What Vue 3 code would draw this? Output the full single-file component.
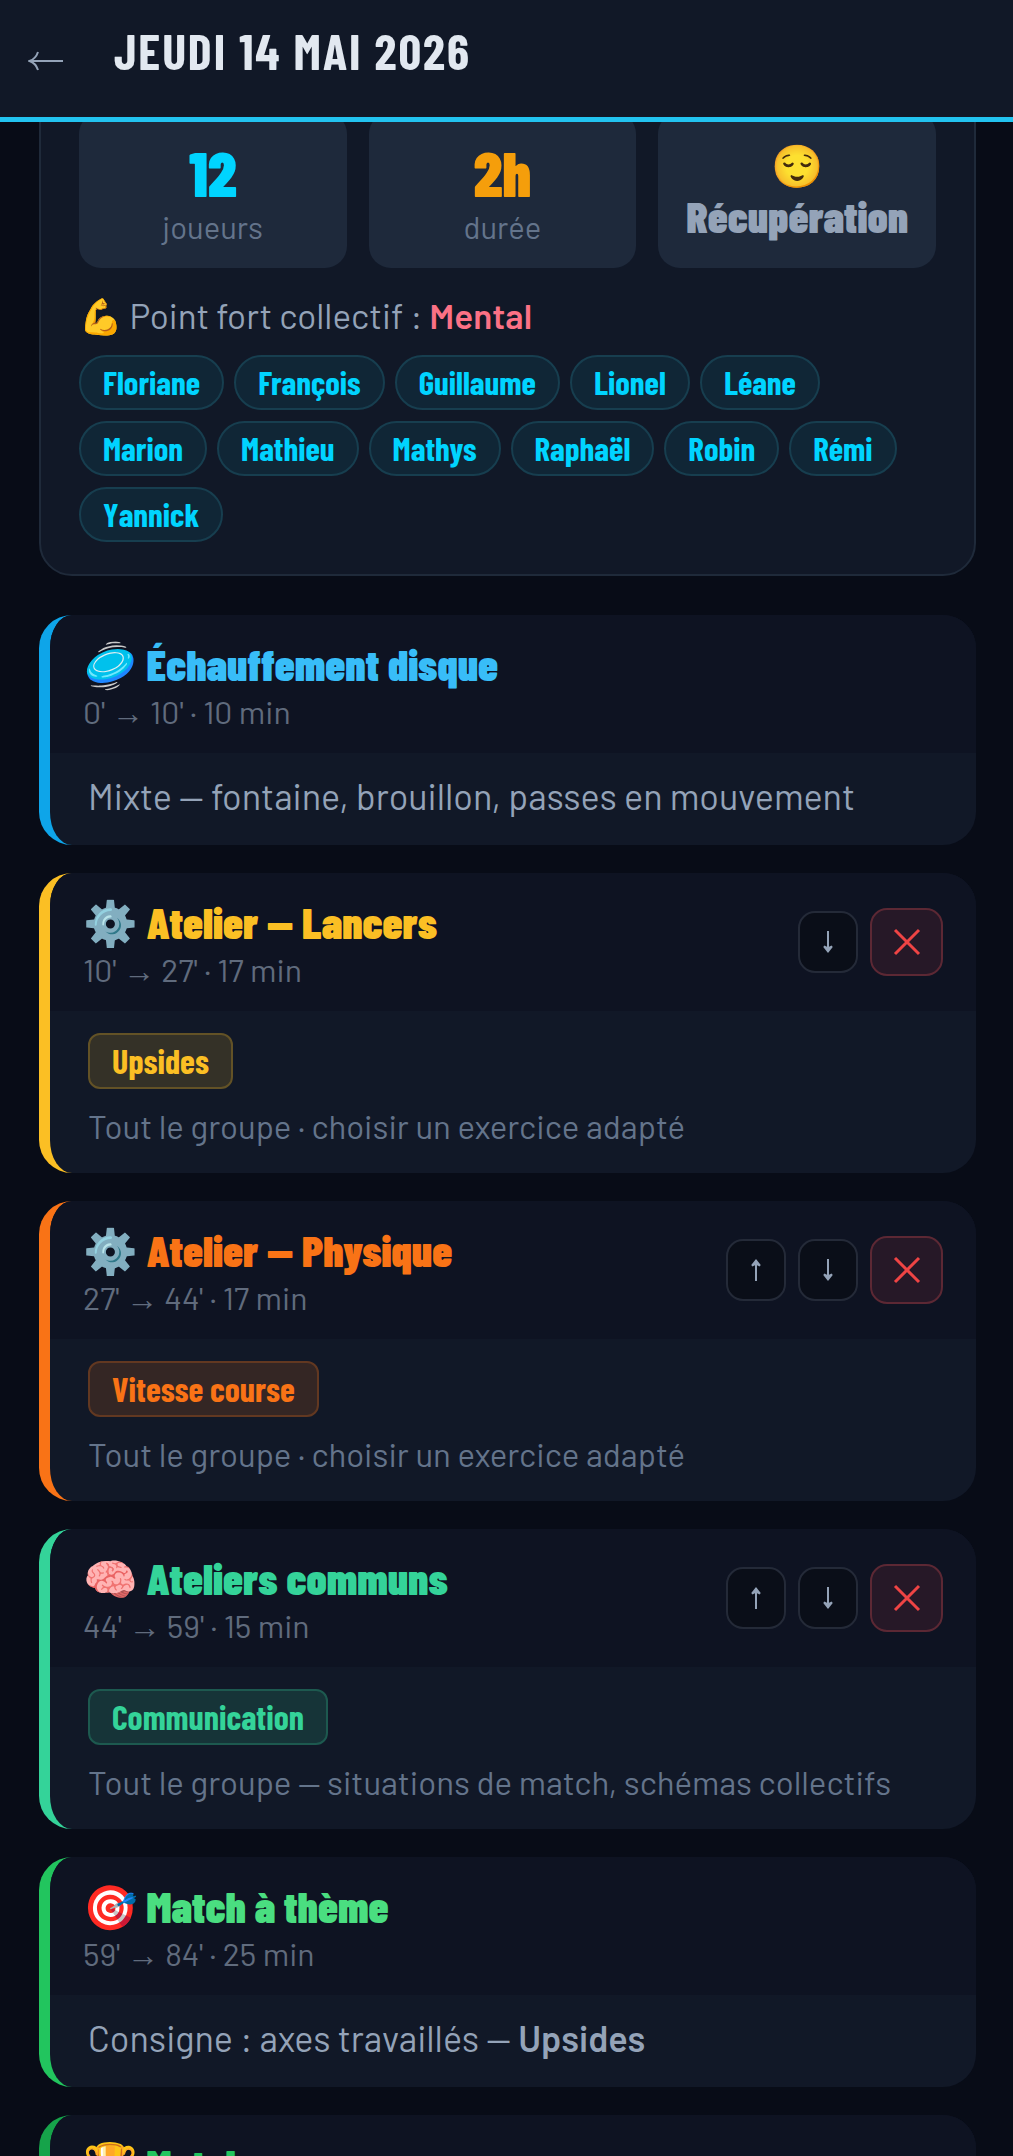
<template>
  <div class="page">
    <header class="topbar">
      <button class="back" type="button" aria-label="Retour">
        <svg viewBox="0 0 36 22" width="36" height="22" class="back-icon"><path d="M35 11H2M10 2C8.500 6.500 6 9.500 1.500 11C6 12.500 8.500 15.500 10 20" /></svg>
      </button>
      <h1>Jeudi 14 mai 2026</h1>
    </header>

    <main class="content">
      <section class="summary">
        <div class="stats">
          <div class="stat">
            <span class="value cyan">12</span>
            <span class="label">joueurs</span>
          </div>
          <div class="stat">
            <span class="value amber">2h</span>
            <span class="label">durée</span>
          </div>
          <div class="stat">
            <span class="mood-icon">😌</span>
            <span class="mood">Récupération</span>
          </div>
        </div>
        <p class="strength"><span class="emoji">💪</span> Point fort collectif : <strong>Mental</strong></p>
        <ul class="players">
          <li v-for="p in players" :key="p">{{ p }}</li>
        </ul>
      </section>

      <article v-for="b in blocks" :key="b.title" class="block" :class="b.theme">
        <div class="block-head">
          <div>
            <h2><span class="emoji">{{ b.icon }}</span> {{ b.title }}</h2>
            <p class="time">{{ b.time }}</p>
          </div>
          <div v-if="b.editable" class="actions">
            <button v-if="b.up" type="button" class="move" aria-label="Monter">
              <svg viewBox="0 0 12 24" width="12" height="24"><path d="M6 23V3M2 7.500L6 2.500L10 7.500L6 5.500Z" /></svg>
            </button>
            <button type="button" class="move" aria-label="Descendre">
              <svg viewBox="0 0 12 24" width="12" height="24"><path d="M6 1V21M2 16.500L6 21.500L10 16.500L6 18.500Z" /></svg>
            </button>
            <button type="button" class="remove" aria-label="Supprimer">
              <svg viewBox="0 0 28 28" width="28" height="28"><path d="M2 2L26 26M26 2L2 26" /></svg>
            </button>
          </div>
        </div>
        <div class="block-body">
          <span v-if="b.tag" class="tag">{{ b.tag }}</span>
          <p :class="b.tag ? 'hint' : 'text'">{{ b.text }} <strong v-if="b.focus">{{ b.focus }}</strong></p>
        </div>
      </article>
    </main>
  </div>
</template>

<script setup>
const players = [
  'Floriane', 'François', 'Guillaume', 'Lionel', 'Léane', 'Marion',
  'Mathieu', 'Mathys', 'Raphaël', 'Robin', 'Rémi', 'Yannick'
]

// Déroulé de la séance
const blocks = [
  { theme: 'sky', icon: '🥏', title: 'Échauffement disque', time: "0' → 10' · 10 min", text: 'Mixte — fontaine, brouillon, passes en mouvement' },
  { theme: 'yellow', icon: '⚙️', title: 'Atelier — Lancers', time: "10' → 27' · 17 min", tag: 'Upsides', text: 'Tout le groupe · choisir un exercice adapté', editable: true },
  { theme: 'orange', icon: '⚙️', title: 'Atelier — Physique', time: "27' → 44' · 17 min", tag: 'Vitesse course', text: 'Tout le groupe · choisir un exercice adapté', editable: true, up: true },
  { theme: 'mint', icon: '🧠', title: 'Ateliers communs', time: "44' → 59' · 15 min", tag: 'Communication', text: 'Tout le groupe — situations de match, schémas collectifs', editable: true, up: true },
  { theme: 'green', icon: '🎯', title: 'Match à thème', time: "59' → 84' · 25 min", text: 'Consigne : axes travaillés —', focus: 'Upsides' },
  { theme: 'forest', icon: '🏆', title: 'Match', time: "84' → 120' · 36 min", text: 'Match libre' }
]
</script>

<style>
body {
  background: #080c17;
}
</style>

<style scoped>
.page {
  --cond: 'Barlow Condensed', 'Roboto Condensed', 'Liberation Sans Narrow', 'Noto Color Emoji', sans-serif;
  font-family: Barlow, Roboto, 'Noto Color Emoji', sans-serif;
  color: #94a3b8;
  height: 100vh;
  overflow: hidden;
}

h1, h2, p, ul {
  margin: 0;
  padding: 0;
}

.topbar {
  position: relative;
  z-index: 2;
  display: flex;
  align-items: flex-start;
  gap: 22px;
  height: 117px;
  padding: 0 28px;
  background: #111827;
  border-bottom: 5px solid #22c3f0;
}

.back {
  display: flex;
  padding: 50px 28px 20px 0;
  background: none;
  border: none;
}

.back-icon {
  fill: none;
  stroke: #94a3b8;
  stroke-width: 2;
}

h1 {
  padding-top: 22px;
  font-family: var(--cond);
  font-size: 50px;
  line-height: 56px;
  font-weight: 700;
  letter-spacing: 2px;
  text-transform: uppercase;
  color: #e2e8f0;
}

.content {
  display: flex;
  flex-direction: column;
  gap: 28px;
  margin-top: -60px;
  padding: 0 37px 40px 39px;
}

.summary {
  margin-bottom: 11px;
  padding: 48px 38px 32px;
  background: #111827;
  border: 2px solid #1f2a3a;
  border-radius: 33px;
}

.stats {
  display: flex;
  gap: 22px;
}

.stat {
  flex: 1;
  display: flex;
  flex-direction: column;
  align-items: center;
  padding: 28px 28px 18px;
  background: #1e293b;
  border-radius: 22px;
  text-align: center;
}

.value {
  font-family: var(--cond);
  font-size: 62px;
  line-height: 64px;
  font-weight: 900;
}

.cyan {
  color: #00d4ff;
}

.amber {
  color: #f59e0b;
}

.label {
  font-size: 31px;
  line-height: 46px;
  color: #64748b;
}

.mood-icon {
  font-size: 42px;
  line-height: 48px;
}

.mood {
  font-family: var(--cond);
  font-size: 44px;
  line-height: 56px;
  font-weight: 900;
}

.strength {
  padding: 22px 0 15px;
  font-size: 35px;
  line-height: 50px;
}

.strength strong {
  font-weight: 600;
  color: #fb7185;
}

.players {
  display: flex;
  flex-wrap: wrap;
  gap: 11px 10px;
  list-style: none;
}

.players li {
  padding: 0 22px;
  font-family: var(--cond);
  font-size: 33px;
  line-height: 51px;
  font-weight: 700;
  color: #00d4ff;
  background: #102636;
  border: 2px solid #173e4f;
  border-radius: 28px;
}

.block {
  overflow: hidden;
  background: #111827;
  border-left: 11px solid var(--edge);
  border-radius: 33px;
}

.block-head {
  display: flex;
  justify-content: space-between;
  align-items: center;
  padding: 22px 33px;
  background: #0e1322;
}

h2 {
  font-family: var(--cond);
  font-size: 44px;
  line-height: 54px;
  font-weight: 900;
  color: var(--title);
}

.time {
  font-size: 32px;
  line-height: 40px;
  color: #606b7d;
}

.actions {
  display: flex;
  align-items: center;
  gap: 12px;
}

.actions button {
  display: flex;
  align-items: center;
  justify-content: center;
  padding: 0;
  border-radius: 17px;
}

.actions svg {
  fill: none;
}

.move {
  width: 60px;
  height: 62px;
  background: #0a0e18;
  border: 2px solid #242a38;
  stroke: #94a3b8;
  stroke-width: 2;
}

.remove {
  width: 73px;
  height: 68px;
  background: #261827;
  border: 2px solid #5c2834;
  stroke: #ef4444;
  stroke-width: 3;
}

.block-body {
  display: flex;
  flex-direction: column;
  align-items: flex-start;
  gap: 12px;
  padding: 22px 38px;
}

.tag {
  padding: 0 22px;
  font-family: var(--cond);
  font-size: 34px;
  line-height: 52px;
  font-weight: 700;
  color: var(--title);
  background: color-mix(in srgb, var(--title) 15%, #111827);
  border: 2px solid color-mix(in srgb, var(--title) 35%, #111827);
  border-radius: 12px;
}

.text {
  padding-bottom: 6px;
  font-size: 36px;
  line-height: 42px;
}

.text strong {
  font-weight: 600;
}

.hint {
  font-size: 33px;
  line-height: 50px;
  color: #64748b;
}

.sky { --edge: #0ea5e9; --title: #38bdf8; }
.yellow { --edge: #fbbf24; --title: #fbbf24; }
.orange { --edge: #f97316; --title: #f97316; }
.mint { --edge: #34d399; --title: #34d399; }
.green { --edge: #22c55e; --title: #4ade80; }
.forest { --edge: #16a34a; --title: #22c55e; }
</style>
